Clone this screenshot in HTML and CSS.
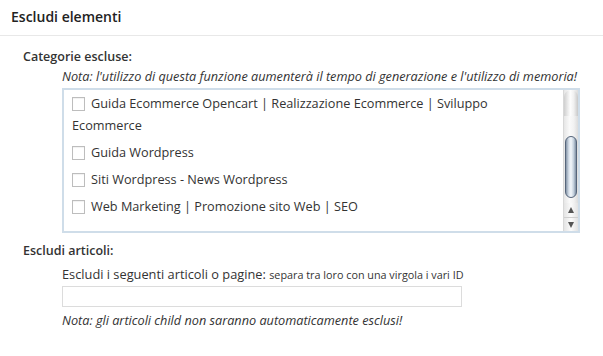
FILE: index.html
```html
<!DOCTYPE html>
<html>
<head>
<meta charset="utf-8">
<link rel="stylesheet" href="styles.css">
</head>
<body>
<div class="panel">
  <h3 class="title">Escludi elementi</h3>
  <div class="body">
    <div class="label">Categorie escluse:</div>
    <div class="indent">
      <div class="note first">Nota: l'utilizzo di questa funzione aumenterà il tempo di generazione e l'utilizzo di memoria!</div>
      <div class="box">
        <ul class="list">
          <li><span class="cb"></span>Guida Ecommerce Opencart | Realizzazione Ecommerce | Sviluppo Ecommerce</li>
          <li><span class="cb"></span>Guida Wordpress</li>
          <li><span class="cb"></span>Siti Wordpress - News Wordpress</li>
          <li><span class="cb"></span>Web Marketing | Promozione sito Web | SEO</li>
        </ul>
        <div class="scrollbar">
          <div class="track">
            <div class="cap"></div>
            <div class="thumb"></div>
          </div>
          <div class="arrow up"><span></span></div>
          <div class="arrow down"><span></span></div>
        </div>
      </div>
    </div>
    <div class="label second">Escludi articoli:</div>
    <div class="indent">
      <div class="field-label">Escludi i seguenti articoli o pagine: <small>separa tra loro con una virgola i vari ID</small></div>
      <input class="text" type="text">
      <div class="note">Nota: gli articoli child non saranno automaticamente esclusi!</div>
    </div>
  </div>
</div>
</body>
</html>
```

FILE: styles.css
```css
* { box-sizing: border-box; }
html, body { margin: 0; padding: 0; background: #fff; }
body {
  font-family: "Open Sans", "Liberation Sans", sans-serif;
  color: #333;
  width: 603px;
  height: 356px;
  overflow: hidden;
}
.title {
  margin: 0;
  height: 36px;
  padding: 7px 11px 0;
  font-size: 14px;
  font-weight: 600;
  line-height: 20px;
  color: #222;
  border-bottom: 1px solid #e8e8e8;
}
.body { padding: 13px 0 0 23px; }
.label {
  font-size: 12.5px;
  font-weight: 600;
  line-height: 16px;
  color: #333;
}
.label.second { margin-top: 10px; }
.indent { padding-left: 39px; }
.note {
  font-size: 12.7px;
  font-style: italic;
  line-height: 18px;
  color: #333;
}
.note.first { margin-top: 2px; }
.box {
  margin-top: 3px;
  width: 518px;
  height: 145px;
  border: 2px solid #cfdde9;
  display: flex;
  overflow: hidden;
}
.list {
  list-style: none;
  margin: 0;
  padding: 2px 22px 0 8px;
  flex: 1;
  font-size: 12.7px;
  line-height: 22px;
  color: #333;
}
.list li { margin-bottom: 5px; }
.cb {
  display: inline-block;
  width: 13px;
  height: 14px;
  border: 1px solid #bdbdbd;
  background: #fff;
  box-shadow: inset 0 1px 1px rgba(0,0,0,0.06);
  vertical-align: -3px;
  margin-right: 6px;
}
.scrollbar {
  width: 15px;
  display: flex;
  flex-direction: column;
  border-left: 1px solid #d8d8d8;
  background: #f4f4f4;
}
.track {
  flex: 1;
  position: relative;
  background: linear-gradient(to right, #e6e6e6, #fafafa 40%, #f2f2f2 70%, #dcdcdc);
}
.cap {
  height: 26px;
  border-radius: 7px 7px 0 0;
  background: linear-gradient(to right, #cfcfcf, #fdfdfd 45%, #f0f0f0 70%, #c8c8c8);
}
.thumb {
  position: absolute;
  left: 1px;
  right: 1px;
  top: 46px;
  height: 62px;
  border-radius: 7px;
  border: 1px solid #56657a;
  background: linear-gradient(to right, #8595a8, #d9e2ec 30%, #f2f6fa 50%, #c6d2de 75%, #7d8ea2);
}
.arrow {
  height: 14px;
  display: flex;
  align-items: center;
  justify-content: center;
  background: linear-gradient(to right, #e4e4e4, #fbfbfb 50%, #e2e2e2);
}
.arrow.down { border-top: 1px solid #cfcfcf; }
.arrow span {
  width: 0;
  height: 0;
  border-left: 3px solid transparent;
  border-right: 3px solid transparent;
}
.arrow.up span { border-bottom: 6px solid #555; }
.arrow.down span { border-top: 6px solid #555; }
.field-label {
  margin-top: 6px;
  font-size: 12.8px;
  line-height: 18px;
  color: #333;
}
.field-label small { font-size: 10.8px; }
.text {
  display: block;
  margin: 2px 0 4px;
  width: 400px;
  height: 21px;
  border: 1px solid #dcdcdc;
  background: #fff;
  padding: 0;
}
```
